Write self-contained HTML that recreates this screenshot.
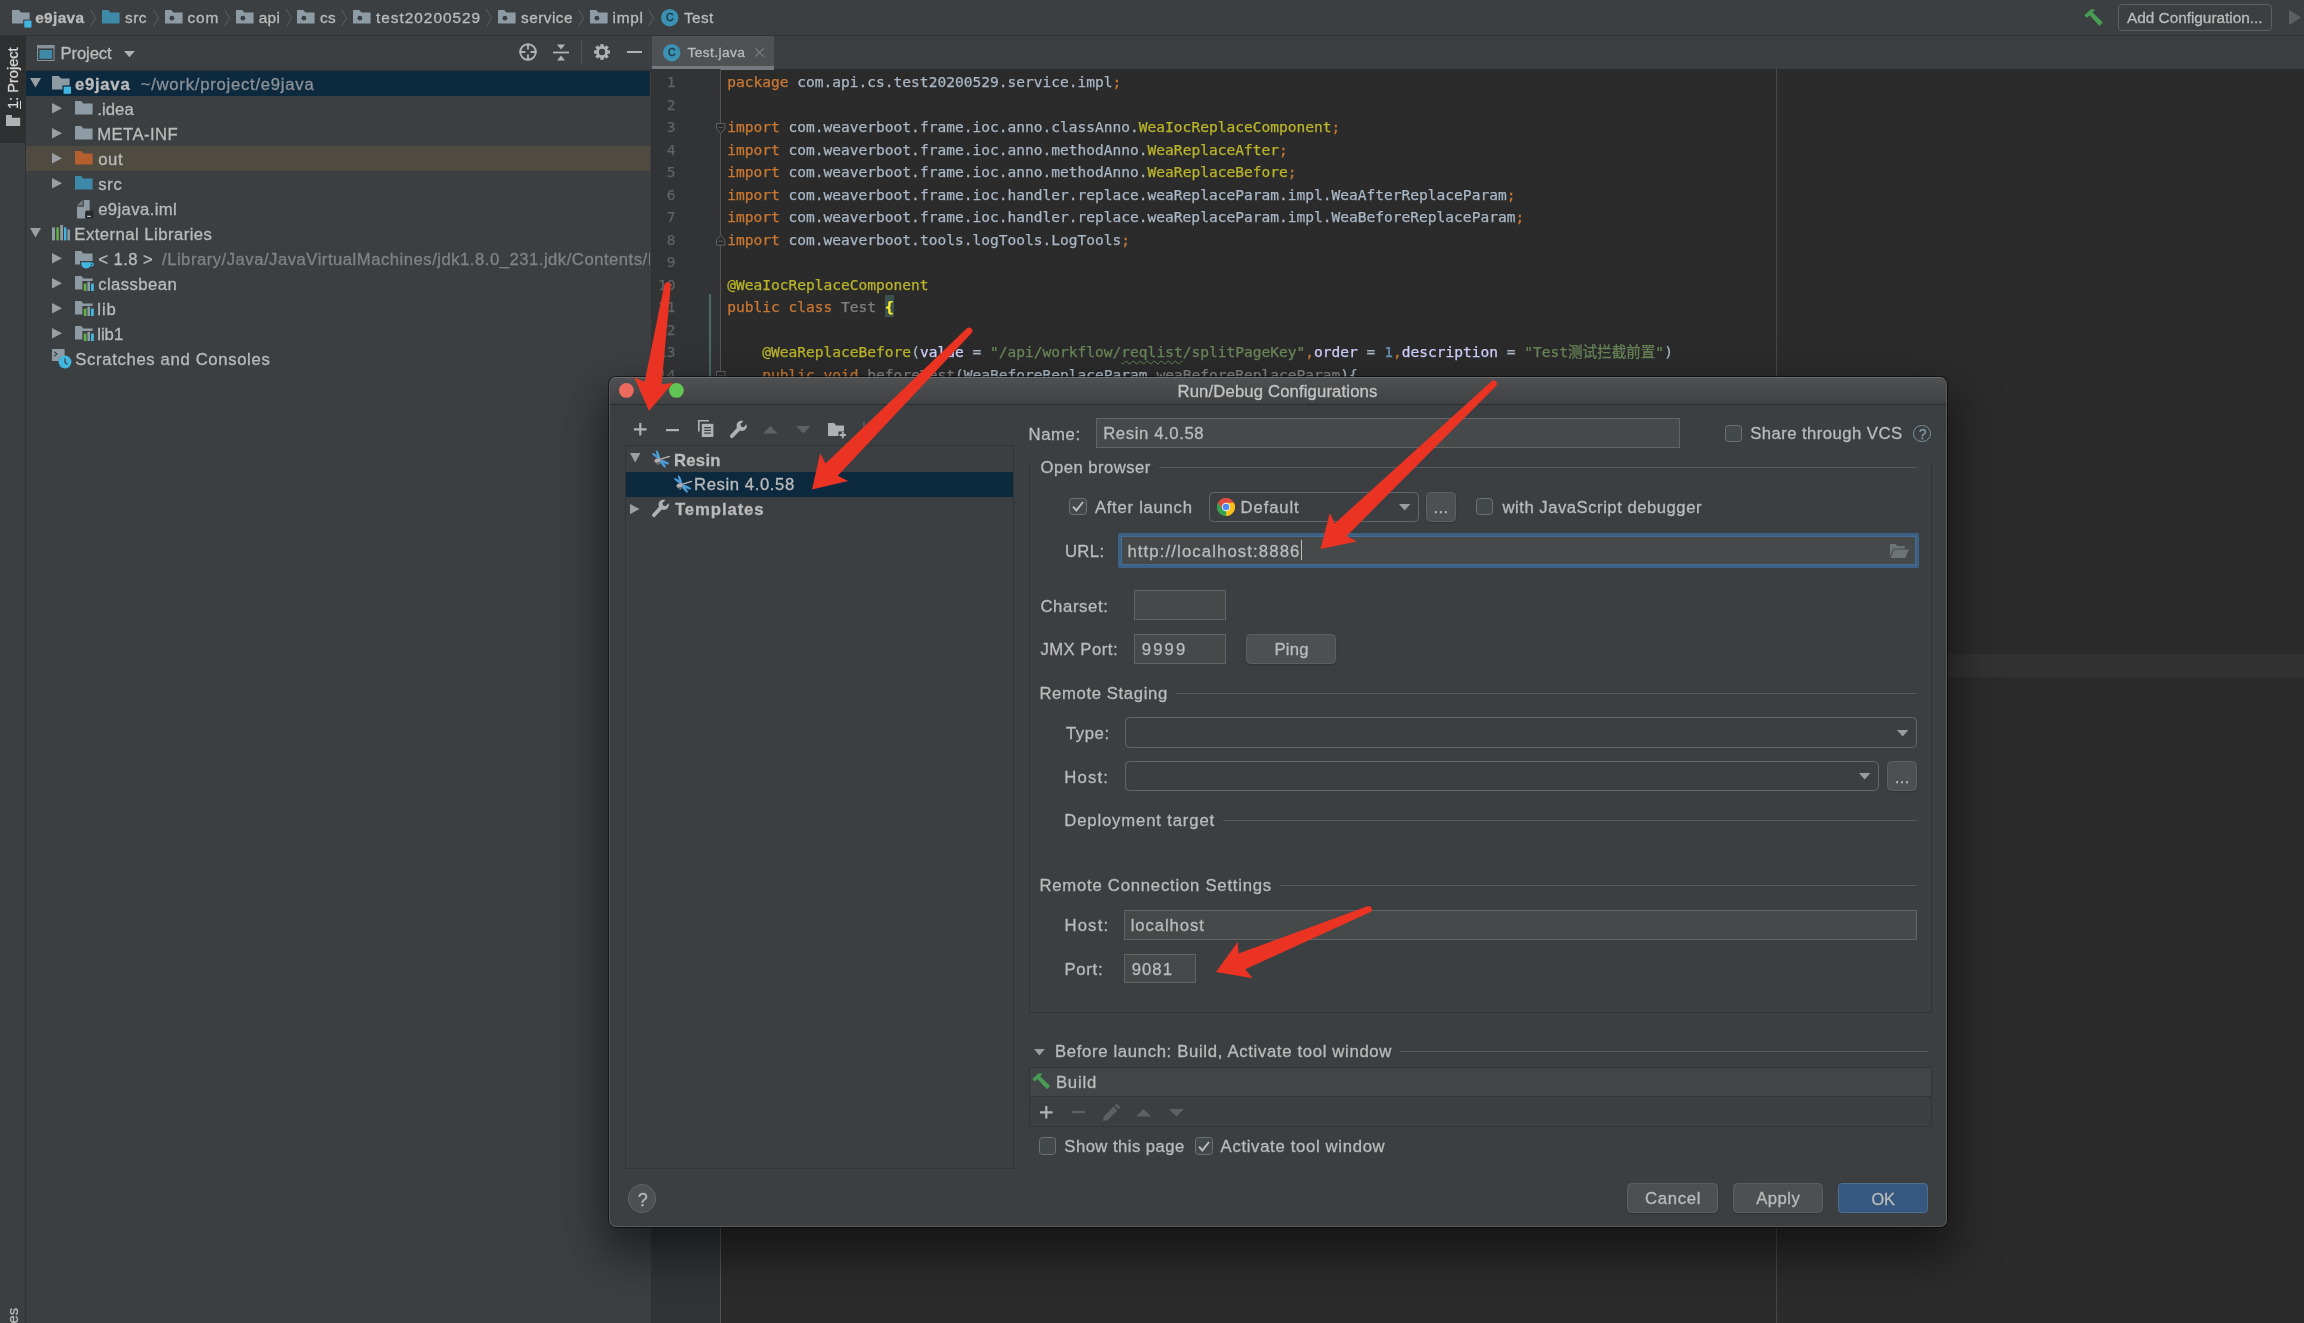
<!DOCTYPE html>
<html><head><meta charset="utf-8"><title>Run/Debug Configurations</title>
<style>
*{box-sizing:border-box;margin:0;padding:0}
html,body{width:2304px;height:1323px;overflow:hidden;background:#3c3f41}
body{position:relative;will-change:transform;font-family:"Liberation Sans","Noto Sans CJK SC",sans-serif;font-size:16px;color:#bbbbbb}
.a{position:absolute}
.t{position:absolute;white-space:pre;-webkit-text-stroke:.3px}
svg{position:absolute;overflow:visible}
.ln{position:absolute;left:651px;width:24.5px;text-align:right;color:#606366;white-space:pre;line-height:22.5px;height:22.5px;font-family:"DejaVu Sans Mono","Liberation Mono",monospace;font-size:14.563px;-webkit-text-stroke:.25px}
.cl{position:absolute;left:727.2px;white-space:pre;line-height:22.5px;height:22.5px;color:#a9b7c6;font-family:"DejaVu Sans Mono","Liberation Mono","Noto Sans CJK SC",monospace;font-size:14.563px;-webkit-text-stroke:.25px}
.k{color:#cc7832}.an{color:#bbb529}.s{color:#6a8759}.n{color:#6897bb}.u{color:#808080}.w{color:#d0d0ff}
</style></head><body>
<!-- base -->
<div class="a" style="left:651px;top:69px;width:1653px;height:1254px;background:#2b2b2b"></div>
<!-- topbar -->
<div class="a" style="left:0px;top:0px;width:2304px;height:35px;background:#3c3f41"></div>
<div class="a" style="left:0px;top:35px;width:2304px;height:1px;background:#323232"></div>
<svg style="left:12px;top:10px" width="19.5" height="17.6" viewBox="0 0 19.5 17.6" ><path d="M0 0 H6.8 L9 2.6 H17.6 V13.6 H0 Z" fill="#8d9ba4"/><rect x="11.2" y="9.6" width="8.3" height="8" fill="#3c3f41"/><rect x="12.3" y="10.6" width="7.2" height="7" fill="#40b6e0"/></svg>
<div class="t" style="left:35.20px;top:7.90px;font-size:15.4px;line-height:20px;height:20px;letter-spacing:0.357px;font-weight:700;">e9java</div>
<svg style="left:90px;top:8.5px" width="6" height="18" viewBox="0 0 6 18" ><path d="M0.5 0.5 L5.5 9 L0.5 17.5" fill="none" stroke="#5c6063" stroke-width="1"/></svg>
<svg style="left:102px;top:10px" width="17.6" height="13.6" viewBox="0 0 17.6 13.6" ><path d="M0 0 H6.2 L8.4 2.4 H17.6 V13.6 H0 Z" fill="#3e88a8"/></svg>
<div class="t" style="left:125.00px;top:7.90px;font-size:15.4px;line-height:20px;height:20px;letter-spacing:0.440px;">src</div>
<svg style="left:152.5px;top:8.5px" width="6" height="18" viewBox="0 0 6 18" ><path d="M0.5 0.5 L5.5 9 L0.5 17.5" fill="none" stroke="#5c6063" stroke-width="1"/></svg>
<svg style="left:164.6px;top:10px" width="17.6" height="13.6" viewBox="0 0 17.6 13.6" ><path d="M0 0 H6.2 L8.4 2.4 H17.6 V13.6 H0 Z" fill="#8d9ba4"/><circle cx="6.9" cy="8.2" r="2.4" fill="#3c3f41"/></svg>
<div class="t" style="left:187.50px;top:7.90px;font-size:15.4px;line-height:20px;height:20px;letter-spacing:0.823px;">com</div>
<svg style="left:223.8px;top:8.5px" width="6" height="18" viewBox="0 0 6 18" ><path d="M0.5 0.5 L5.5 9 L0.5 17.5" fill="none" stroke="#5c6063" stroke-width="1"/></svg>
<svg style="left:235.8px;top:10px" width="17.6" height="13.6" viewBox="0 0 17.6 13.6" ><path d="M0 0 H6.2 L8.4 2.4 H17.6 V13.6 H0 Z" fill="#8d9ba4"/><circle cx="6.9" cy="8.2" r="2.4" fill="#3c3f41"/></svg>
<div class="t" style="left:258.70px;top:7.90px;font-size:15.4px;line-height:20px;height:20px;letter-spacing:0.340px;">api</div>
<svg style="left:286px;top:8.5px" width="6" height="18" viewBox="0 0 6 18" ><path d="M0.5 0.5 L5.5 9 L0.5 17.5" fill="none" stroke="#5c6063" stroke-width="1"/></svg>
<svg style="left:296.9px;top:10px" width="17.6" height="13.6" viewBox="0 0 17.6 13.6" ><path d="M0 0 H6.2 L8.4 2.4 H17.6 V13.6 H0 Z" fill="#8d9ba4"/><circle cx="6.9" cy="8.2" r="2.4" fill="#3c3f41"/></svg>
<div class="t" style="left:320.00px;top:7.90px;font-size:15.4px;line-height:20px;height:20px;letter-spacing:0.305px;">cs</div>
<svg style="left:341px;top:8.5px" width="6" height="18" viewBox="0 0 6 18" ><path d="M0.5 0.5 L5.5 9 L0.5 17.5" fill="none" stroke="#5c6063" stroke-width="1"/></svg>
<svg style="left:353.3px;top:10px" width="17.6" height="13.6" viewBox="0 0 17.6 13.6" ><path d="M0 0 H6.2 L8.4 2.4 H17.6 V13.6 H0 Z" fill="#8d9ba4"/><circle cx="6.9" cy="8.2" r="2.4" fill="#3c3f41"/></svg>
<div class="t" style="left:376.00px;top:7.90px;font-size:15.4px;line-height:20px;height:20px;letter-spacing:0.989px;">test20200529</div>
<svg style="left:486px;top:8.5px" width="6" height="18" viewBox="0 0 6 18" ><path d="M0.5 0.5 L5.5 9 L0.5 17.5" fill="none" stroke="#5c6063" stroke-width="1"/></svg>
<svg style="left:498px;top:10px" width="17.6" height="13.6" viewBox="0 0 17.6 13.6" ><path d="M0 0 H6.2 L8.4 2.4 H17.6 V13.6 H0 Z" fill="#8d9ba4"/><circle cx="6.9" cy="8.2" r="2.4" fill="#3c3f41"/></svg>
<div class="t" style="left:521.00px;top:7.90px;font-size:15.4px;line-height:20px;height:20px;letter-spacing:0.468px;">service</div>
<svg style="left:578px;top:8.5px" width="6" height="18" viewBox="0 0 6 18" ><path d="M0.5 0.5 L5.5 9 L0.5 17.5" fill="none" stroke="#5c6063" stroke-width="1"/></svg>
<svg style="left:590.4px;top:10px" width="17.6" height="13.6" viewBox="0 0 17.6 13.6" ><path d="M0 0 H6.2 L8.4 2.4 H17.6 V13.6 H0 Z" fill="#8d9ba4"/><circle cx="6.9" cy="8.2" r="2.4" fill="#3c3f41"/></svg>
<div class="t" style="left:612.50px;top:7.90px;font-size:15.4px;line-height:20px;height:20px;letter-spacing:0.734px;">impl</div>
<svg style="left:648.4px;top:8.5px" width="6" height="18" viewBox="0 0 6 18" ><path d="M0.5 0.5 L5.5 9 L0.5 17.5" fill="none" stroke="#5c6063" stroke-width="1"/></svg>
<svg style="left:660.6999999999999px;top:8.7px" width="17.4" height="17.4" viewBox="0 0 17.4 17.4" ><circle cx="8.7" cy="8.7" r="8.7" fill="#3a91b3"/><text x="8.7" y="12.399999999999999" text-anchor="middle" font-family="Liberation Sans,sans-serif" font-size="10.6" font-weight="400" fill="#1f3a47" stroke="#1f3a47" stroke-width=".5">C</text></svg>
<div class="t" style="left:684.00px;top:7.90px;font-size:15.4px;line-height:20px;height:20px;letter-spacing:0.350px;">Test</div>
<svg style="left:2084.4px;top:8.6px" width="19.0" height="17.5" viewBox="0 0 19 17.5" ><path d="M0.3 6.2 L6.6 0.6 Q9.2 -0.5 11 1 L8.4 3.3 L18.8 13.6 L15.6 17 L5.6 6.3 L2.9 8.8 Z" fill="#499c54"/></svg>
<div class="a" style="left:2118px;top:4px;width:153.6px;height:27px;border:1px solid #5e6060;border-radius:4px;"></div>
<div class="t" style="left:2127.00px;top:7.90px;font-size:15.4px;line-height:20px;height:20px;letter-spacing:-0.029px;">Add Configuration...</div>
<svg style="left:2289px;top:10px" width="12.2" height="15" viewBox="0 0 12.2 15" ><path d="M0 0 L12.2 7.5 L0 15 Z" fill="#5c5f61"/></svg>
<!-- stripe -->
<div class="a" style="left:0px;top:36px;width:25px;height:1287px;background:#3c3f41"></div>
<div class="a" style="left:25px;top:36px;width:1px;height:1287px;background:#323232"></div>
<div class="a" style="left:0px;top:36px;width:25px;height:106.5px;background:#2d2f30"></div>
<div class="t" style="left:3.2px;top:108.6px;width:70px;height:20px;line-height:20px;font-size:14.6px;letter-spacing:0;color:#d4d4d4;transform-origin:0 0;transform:rotate(-90deg)"><span style="text-decoration:underline;text-underline-offset:2px">1</span>: Project</div>
<svg style="left:5.9px;top:114.8px" width="14.2" height="11.1" viewBox="0 0 14.2 11.1" ><path d="M0 2.7 H14.2 V11.1 H0 Z M0 0 H5.9 V2.7 H0 Z" fill="#afb1b3"/></svg>
<div class="t" style="left:3.2px;top:1408px;width:100px;text-align:right;height:20px;line-height:20px;font-size:14.6px;letter-spacing:0;color:#bbbbbb;transform-origin:0 0;transform:rotate(-90deg)">2: Favorites</div>
<!-- project -->
<div class="a" style="left:26px;top:36px;width:625px;height:34px;background:#3c3f41"></div>
<div class="a" style="left:26px;top:70px;width:625px;height:1px;background:#323232"></div>
<div class="a" style="left:650.8px;top:36px;width:1px;height:1287px;background:#323232"></div>
<svg style="left:37px;top:44.5px" width="17.5" height="16" viewBox="0 0 17.5 16" ><rect x="0.5" y="0.5" width="16.5" height="15" fill="none" stroke="#87939b" stroke-width="1"/><rect x="0" y="0" width="17.5" height="3.4" fill="#87939b"/><rect x="2.4" y="5" width="12.7" height="8.8" fill="#3e88a8"/></svg>
<div class="t" style="left:60.50px;top:44.40px;font-size:16.7px;line-height:20px;height:20px;letter-spacing:-0.133px;">Project</div>
<svg style="left:124.2px;top:51px" width="10.9" height="6.3" viewBox="0 0 10.9 6.3" ><path d="M0 0 H10.9 L5.45 6.3 Z" fill="#afb1b3"/></svg>
<svg style="left:519px;top:43px" width="18" height="18" viewBox="0 0 18 18" ><circle cx="9" cy="9" r="7.8" fill="none" stroke="#afb1b3" stroke-width="1.9"/><path d="M9 0.6 V6.4 M9 11.6 V17.4 M0.6 9 H6.4 M11.6 9 H17.4" stroke="#afb1b3" stroke-width="1.9"/></svg>
<svg style="left:552.5px;top:43.5px" width="16" height="17" viewBox="0 0 16 17" ><path d="M0 8.5 H16" stroke="#afb1b3" stroke-width="1.8"/><path d="M4 0.5 H12 L8 5.6 Z M4 16.5 H12 L8 11.4 Z" fill="#afb1b3"/></svg>
<div class="a" style="left:581px;top:40px;width:1px;height:24px;background:#505355"></div>
<svg style="left:592.7px;top:43px" width="18" height="18" viewBox="0 0 18 18" ><g transform="translate(9 9) scale(.88)"><circle r="5.2" fill="none" stroke="#afb1b3" stroke-width="3.2"/><g fill="#afb1b3"><rect x="-1.9" y="-9" width="3.8" height="4"/><rect x="-1.9" y="5" width="3.8" height="4"/><rect x="-9" y="-1.9" width="4" height="3.8"/><rect x="5" y="-1.9" width="4" height="3.8"/><g transform="rotate(45)"><rect x="-1.9" y="-9" width="3.8" height="4"/><rect x="-1.9" y="5" width="3.8" height="4"/><rect x="-9" y="-1.9" width="4" height="3.8"/><rect x="5" y="-1.9" width="4" height="3.8"/></g></g></g></svg>
<div class="a" style="left:627px;top:51px;width:14.6px;height:2.2px;background:#afb1b3"></div>
<div class="a" style="left:26px;top:71px;width:624px;height:25px;background:#0d293e"></div>
<div class="a" style="left:26px;top:146px;width:624px;height:25px;background:#4f4b41"></div>
<svg style="left:30px;top:78.2px" width="11" height="9.5" viewBox="0 0 11 9.5" ><path d="M0 0 H11 L5.5 9.5 Z" fill="#9c9fa1"/></svg>
<svg style="left:51.9px;top:76px" width="19.5" height="17.8" viewBox="0 0 19.5 17.8" ><path d="M0 0 H6.8 L9 2.6 H17.6 V13.6 H0 Z" fill="#8d9ba4"/><rect x="10.4" y="9.4" width="9" height="8.4" fill="#0d293e"/><rect x="11.6" y="10.6" width="7.4" height="7.2" fill="#40b6e0"/></svg>
<div class="t" style="left:74.90px;top:75.10px;font-size:16.7px;line-height:20px;height:20px;letter-spacing:0.748px;font-weight:700;">e9java</div>
<div class="t" style="left:140.70px;top:75.10px;font-size:16.7px;line-height:20px;height:20px;letter-spacing:0.742px;color:#8b9197;">~/work/project/e9java</div>
<svg style="left:52.2px;top:103.2px" width="10" height="10.6" viewBox="0 0 10 10.6" ><path d="M0 0 L10 5.3 L0 10.6 Z" fill="#9c9fa1"/></svg>
<svg style="left:52.2px;top:128.2px" width="10" height="10.6" viewBox="0 0 10 10.6" ><path d="M0 0 L10 5.3 L0 10.6 Z" fill="#9c9fa1"/></svg>
<svg style="left:52.2px;top:153.2px" width="10" height="10.6" viewBox="0 0 10 10.6" ><path d="M0 0 L10 5.3 L0 10.6 Z" fill="#9c9fa1"/></svg>
<svg style="left:52.2px;top:178.2px" width="10" height="10.6" viewBox="0 0 10 10.6" ><path d="M0 0 L10 5.3 L0 10.6 Z" fill="#9c9fa1"/></svg>
<svg style="left:74.9px;top:101.2px" width="17.6" height="13.6" viewBox="0 0 17.6 13.6" ><path d="M0 0 H6.2 L8.4 2.4 H17.6 V13.6 H0 Z" fill="#8d9ba4"/></svg>
<div class="t" style="left:97.20px;top:100.10px;font-size:16.7px;line-height:20px;height:20px;letter-spacing:0.074px;">.idea</div>
<svg style="left:74.9px;top:126.2px" width="17.6" height="13.6" viewBox="0 0 17.6 13.6" ><path d="M0 0 H6.2 L8.4 2.4 H17.6 V13.6 H0 Z" fill="#8d9ba4"/></svg>
<div class="t" style="left:97.20px;top:125.10px;font-size:16.7px;line-height:20px;height:20px;letter-spacing:0.434px;">META-INF</div>
<svg style="left:74.9px;top:151.2px" width="17.6" height="13.6" viewBox="0 0 17.6 13.6" ><path d="M0 0 H6.2 L8.4 2.4 H17.6 V13.6 H0 Z" fill="#b55f2f"/></svg>
<div class="t" style="left:98.20px;top:150.10px;font-size:16.7px;line-height:20px;height:20px;letter-spacing:0.569px;">out</div>
<svg style="left:74.9px;top:176.2px" width="17.6" height="13.6" viewBox="0 0 17.6 13.6" ><path d="M0 0 H6.2 L8.4 2.4 H17.6 V13.6 H0 Z" fill="#3e88a8"/></svg>
<div class="t" style="left:98.20px;top:175.10px;font-size:16.7px;line-height:20px;height:20px;letter-spacing:0.700px;">src</div>
<svg style="left:77.3px;top:200px" width="16.5" height="18.5" viewBox="0 0 16.5 18.5" ><path d="M6.8 0 H12.6 V12 H8 V18.5 H0 V6.8 H6.8 Z" fill="#8d9ba4"/><path d="M0 5.6 L5.6 0 V5.6 Z" fill="#73808a"/><rect x="8.6" y="10.6" width="7.9" height="7.9" fill="#26282a"/><rect x="10.2" y="15.8" width="3.6" height="1.1" fill="#d8d8d8"/></svg>
<div class="t" style="left:98.20px;top:200.10px;font-size:16.7px;line-height:20px;height:20px;letter-spacing:0.387px;">e9java.iml</div>
<svg style="left:30px;top:228.2px" width="11" height="9.5" viewBox="0 0 11 9.5" ><path d="M0 0 H11 L5.5 9.5 Z" fill="#9c9fa1"/></svg>
<svg style="left:52.2px;top:224.6px" width="18" height="15.4" viewBox="0 0 18 15.4" ><rect x="0" y="2.4" width="3" height="13" fill="#8d9ba4"/><rect x="4.4" y="2.4" width="2.4" height="13" fill="#62b543"/><rect x="8.2" y="0" width="2.8" height="15.4" fill="#8d9ba4"/><rect x="12" y="2.4" width="2.4" height="13" fill="#40b6e0"/><rect x="15.4" y="4.6" width="2.6" height="10.8" fill="#8d9ba4"/></svg>
<div class="t" style="left:74.30px;top:225.10px;font-size:16.7px;line-height:20px;height:20px;letter-spacing:0.458px;">External Libraries</div>
<svg style="left:52.2px;top:253.2px" width="10" height="10.6" viewBox="0 0 10 10.6" ><path d="M0 0 L10 5.3 L0 10.6 Z" fill="#9c9fa1"/></svg>
<svg style="left:52.2px;top:278.2px" width="10" height="10.6" viewBox="0 0 10 10.6" ><path d="M0 0 L10 5.3 L0 10.6 Z" fill="#9c9fa1"/></svg>
<svg style="left:52.2px;top:303.2px" width="10" height="10.6" viewBox="0 0 10 10.6" ><path d="M0 0 L10 5.3 L0 10.6 Z" fill="#9c9fa1"/></svg>
<svg style="left:52.2px;top:328.2px" width="10" height="10.6" viewBox="0 0 10 10.6" ><path d="M0 0 L10 5.3 L0 10.6 Z" fill="#9c9fa1"/></svg>
<svg style="left:74.9px;top:251.2px" width="19.5" height="18" viewBox="0 0 19.5 18" ><path d="M0 0 H6.2 L8.4 2.4 H17.6 V10 H5 V13.6 H0 Z" fill="#8d9ba4"/><path d="M6.2 11.2 H16.2 C16.2 15 14.4 17.4 11.2 17.4 C8 17.4 6.2 15 6.2 11.2 Z" fill="#40b6e0"/><path d="M16 12.2 C18.6 11.6 19.4 14.6 15.4 15.2" fill="none" stroke="#40b6e0" stroke-width="1.2"/></svg>
<div class="t" style="left:98.20px;top:250.10px;font-size:16.7px;line-height:20px;height:20px;letter-spacing:0.447px;">&lt; 1.8 &gt;</div>
<div class="t" style="left:162.00px;top:250.10px;font-size:16.7px;line-height:20px;height:20px;letter-spacing:0.494px;color:#7f8385;width:488px;overflow:hidden;">/Library/Java/JavaVirtualMachines/jdk1.8.0_231.jdk/Contents/Home</div>
<svg style="left:74.9px;top:276.2px" width="19" height="15" viewBox="0 0 19 15" ><path d="M0 0 H6.2 L8.4 2.4 H17.6 V5 H7.4 V13.6 H0 Z" fill="#8d9ba4"/><rect x="8.8" y="7.6" width="2.6" height="7.4" fill="#62b543"/><rect x="12.4" y="5.8" width="2.6" height="9.2" fill="#8d9ba4"/><rect x="16" y="7.6" width="2.8" height="7.4" fill="#40b6e0"/></svg>
<div class="t" style="left:98.20px;top:275.10px;font-size:16.7px;line-height:20px;height:20px;letter-spacing:0.417px;">classbean</div>
<svg style="left:74.9px;top:301.2px" width="19" height="15" viewBox="0 0 19 15" ><path d="M0 0 H6.2 L8.4 2.4 H17.6 V5 H7.4 V13.6 H0 Z" fill="#8d9ba4"/><rect x="8.8" y="7.6" width="2.6" height="7.4" fill="#62b543"/><rect x="12.4" y="5.8" width="2.6" height="9.2" fill="#8d9ba4"/><rect x="16" y="7.6" width="2.8" height="7.4" fill="#40b6e0"/></svg>
<div class="t" style="left:97.20px;top:300.10px;font-size:16.7px;line-height:20px;height:20px;letter-spacing:0.993px;">lib</div>
<svg style="left:74.9px;top:326.2px" width="19" height="15" viewBox="0 0 19 15" ><path d="M0 0 H6.2 L8.4 2.4 H17.6 V5 H7.4 V13.6 H0 Z" fill="#8d9ba4"/><rect x="8.8" y="7.6" width="2.6" height="7.4" fill="#62b543"/><rect x="12.4" y="5.8" width="2.6" height="9.2" fill="#8d9ba4"/><rect x="16" y="7.6" width="2.8" height="7.4" fill="#40b6e0"/></svg>
<div class="t" style="left:97.20px;top:325.10px;font-size:16.7px;line-height:20px;height:20px;letter-spacing:0.001px;">lib1</div>
<svg style="left:52.2px;top:349px" width="19.5" height="19.5" viewBox="0 0 19.5 19.5" ><path d="M0 0 H12.6 V7 A6.6 6.6 0 0 0 6.6 12 H0 Z" fill="#8d9ba4"/><path d="M2 2.6 L5 5 L2 7.4" fill="none" stroke="#3c3f41" stroke-width="1.1"/><circle cx="13" cy="13" r="6.4" fill="#40b6e0"/><path d="M13 9.4 V13.2 L15.4 15.4" fill="none" stroke="#3c3f41" stroke-width="1.3"/></svg>
<div class="t" style="left:75.30px;top:350.10px;font-size:16.7px;line-height:20px;height:20px;letter-spacing:0.646px;">Scratches and Consoles</div>
<!-- editor -->
<div class="a" style="left:651px;top:36px;width:1653px;height:33px;background:#3c3f41"></div>
<div class="a" style="left:652px;top:36px;width:122.3px;height:30px;background:#4e5254"></div>
<div class="a" style="left:652px;top:66px;width:122.3px;height:3.7px;background:#747a80"></div>
<svg style="left:663.0999999999999px;top:43.599999999999994px" width="17.4" height="17.4" viewBox="0 0 17.4 17.4" ><circle cx="8.7" cy="8.7" r="8.7" fill="#3a91b3"/><text x="8.7" y="12.399999999999999" text-anchor="middle" font-family="Liberation Sans,sans-serif" font-size="10.6" font-weight="400" fill="#1f3a47" stroke="#1f3a47" stroke-width=".5">C</text></svg>
<div class="t" style="left:687.40px;top:42.70px;font-size:13.7px;line-height:20px;height:20px;letter-spacing:0.425px;">Test.java</div>
<svg style="left:755px;top:48px" width="9" height="9" viewBox="0 0 9 9" ><path d="M0.3 0.3 L8.7 8.7 M8.7 0.3 L0.3 8.7" stroke="#7d8183" stroke-width="1.1" fill="none"/></svg>
<div class="a" style="left:651px;top:69px;width:69.5px;height:1254px;background:#313335"></div>
<div class="a" style="left:720px;top:69px;width:1px;height:1254px;background:#555555"></div>
<div class="a" style="left:1776px;top:69px;width:1px;height:1254px;background:#464849"></div>
<div class="a" style="left:721px;top:654px;width:1583px;height:23px;background:#323232"></div>
<div class="a" style="left:709px;top:294px;width:1.6px;height:84px;background:#4a6b60"></div>
<div class="ln" style="top:71.15px">1</div>
<div class="ln" style="top:93.65px">2</div>
<div class="ln" style="top:116.15px">3</div>
<div class="ln" style="top:138.65px">4</div>
<div class="ln" style="top:161.15px">5</div>
<div class="ln" style="top:183.65px">6</div>
<div class="ln" style="top:206.15px">7</div>
<div class="ln" style="top:228.65px">8</div>
<div class="ln" style="top:251.15px">9</div>
<div class="ln" style="top:273.65px">10</div>
<div class="ln" style="top:296.15px">11</div>
<div class="ln" style="top:318.65px">12</div>
<div class="ln" style="top:341.15px">13</div>
<div class="ln" style="top:363.65px">14</div>
<div class="cl" style="top:71.15px"><span class="k">package</span> com.api.cs.test20200529.service.impl<span class="k">;</span></div>
<div class="cl" style="top:116.15px"><span class="k">import</span> com.weaverboot.frame.ioc.anno.classAnno.<span class="an">WeaIocReplaceComponent</span><span class="k">;</span></div>
<div class="cl" style="top:138.65px"><span class="k">import</span> com.weaverboot.frame.ioc.anno.methodAnno.<span class="an">WeaReplaceAfter</span><span class="k">;</span></div>
<div class="cl" style="top:161.15px"><span class="k">import</span> com.weaverboot.frame.ioc.anno.methodAnno.<span class="an">WeaReplaceBefore</span><span class="k">;</span></div>
<div class="cl" style="top:183.65px"><span class="k">import</span> com.weaverboot.frame.ioc.handler.replace.weaReplaceParam.impl.WeaAfterReplaceParam<span class="k">;</span></div>
<div class="cl" style="top:206.15px"><span class="k">import</span> com.weaverboot.frame.ioc.handler.replace.weaReplaceParam.impl.WeaBeforeReplaceParam<span class="k">;</span></div>
<div class="cl" style="top:228.65px"><span class="k">import</span> com.weaverboot.tools.logTools.LogTools<span class="k">;</span></div>
<div class="cl" style="top:273.65px"><span class="an">@WeaIocReplaceComponent</span></div>
<div class="cl" style="top:296.15px"><span class="k">public class</span> <span class="u">Test</span> <span style="display:inline-block;height:22.5px;vertical-align:top;margin-top:-1.6px;padding-top:1.6px;background:#3b514d;color:#ffef28;font-weight:700">{</span></div>
<div class="cl" style="top:341.15px">    <span class="an">@WeaReplaceBefore</span>(<span class="w">value</span> = <span class="s">"/api/workflow/<span style="text-decoration:underline wavy #5e8a4c;text-decoration-thickness:1px;text-underline-offset:3px">reqlist</span>/splitPageKey"</span><span class="k">,</span><span class="w">order</span> = <span class="n">1</span><span class="k">,</span><span class="w">description</span> = <span class="s">"Test测试拦截前置"</span>)</div>
<div class="cl" style="top:363.65px">    <span class="k">public void</span> <span class="u">beforeTest</span>(WeaBeforeReplaceParam <span class="u">weaBeforeReplaceParam</span>){</div>
<svg style="left:715.8px;top:122.60000000000001px" width="9.5" height="10.7" viewBox="0 0 9.5 10.7" ><path d="M0.5 0.5 H9 V6 L4.75 10.2 L0.5 6 Z" fill="#2b2b2b" stroke="#606366" stroke-width="1"/><path d="M2.6 4.6 H6.9" stroke="#606366" stroke-width="1"/></svg>
<svg style="left:715.8px;top:234.6px" width="9.5" height="10.7" viewBox="0 0 9.5 10.7" ><path d="M0.5 10.2 H9 V4.7 L4.75 0.5 L0.5 4.7 Z" fill="#2b2b2b" stroke="#606366" stroke-width="1"/><path d="M2.6 6.2 H6.9" stroke="#606366" stroke-width="1"/></svg>
<svg style="left:715.8px;top:370.59999999999997px" width="9.5" height="10.7" viewBox="0 0 9.5 10.7" ><rect x="0.5" y="0.5" width="8.5" height="9" fill="#2b2b2b" stroke="#606366"/><path d="M2.6 5 H6.9" stroke="#606366" stroke-width="1"/></svg>
<!-- shadow -->
<div class="a" style="left:609px;top:376.5px;width:1338px;height:850px;border-radius:7px;box-shadow:0 22px 45px 6px rgba(0,0,0,.50),0 0 0 1px rgba(0,0,0,.55);"></div>
<!-- dialog -->
<div class="a" style="left:609px;top:376.5px;width:1338px;height:850px;border-radius:7px;background:#3c3f41;border:1px solid #595b5d;border-top-color:#6c6e6f;overflow:hidden;"><div class="a" style="left:0;top:0;width:100%;height:26px;background:linear-gradient(#4e5051,#3f4142)"></div><div class="a" style="left:0;top:26px;width:100%;height:1.5px;background:#2a2c2d"></div></div>
<svg style="left:618.9px;top:383.3px" width="14.8" height="14.8" viewBox="0 0 14.8 14.8" ><circle cx="7.4" cy="7.4" r="7.4" fill="#ec6a5e"/></svg>
<svg style="left:643.9px;top:383.3px" width="14.8" height="14.8" viewBox="0 0 14.8 14.8" ><circle cx="7.4" cy="7.4" r="7.4" fill="#f4bf4f"/></svg>
<svg style="left:668.9px;top:383.3px" width="14.8" height="14.8" viewBox="0 0 14.8 14.8" ><circle cx="7.4" cy="7.4" r="7.4" fill="#61c554"/></svg>
<div class="t" style="left:1177.50px;top:382.20px;font-size:16.7px;line-height:20px;height:20px;letter-spacing:0.138px;color:#c4c4c4;">Run/Debug Configurations</div>
<svg style="left:633.5px;top:423.3px" width="12.6" height="12.6" viewBox="0 0 12.6 12.6" ><path d="M0 6.3 H12.6 M6.3 0 V12.6" stroke="#afb1b3" stroke-width="2.2" fill="none"/></svg>
<svg style="left:666.3px;top:428.59999999999997px" width="13" height="2.2" viewBox="0 0 13 2.2" ><rect width="13" height="2.2" fill="#afb1b3"/></svg>
<svg style="left:698px;top:420px" width="15.4" height="17" viewBox="0 0 15.4 17" ><path d="M0.8 11.6 V0.8 H11" fill="none" stroke="#afb1b3" stroke-width="1.6"/><rect x="3.8" y="3.8" width="11.6" height="13.2" fill="#afb1b3"/><path d="M6.2 7.6 H13 M6.2 10.4 H13 M6.2 13.2 H13" stroke="#3c3f41" stroke-width="1.2"/></svg>
<svg style="left:729.7px;top:420.6px" width="17.5" height="17.5" viewBox="0 0 17.5 17.5" ><path d="M16.6 3.2 L13.6 6.2 L11 5.6 L10.4 3 L13.4 0 C11.2 -0.6 8.8 0 7.6 1.6 C6.4 3.2 6.3 5.2 7 6.8 L0.4 14 C-0.3 14.8 -0.1 15.9 0.6 16.6 C1.3 17.3 2.5 17.4 3.2 16.6 L9.9 9.6 C11.6 10.4 13.8 10.1 15.3 8.6 C16.8 7.1 17.2 5 16.6 3.2 Z" fill="#afb1b3"/></svg>
<svg style="left:763.2px;top:426px" width="14.6" height="7.5" viewBox="0 0 14.6 7.5" ><path d="M0 7.5 L7.3 0 L14.6 7.5 Z" fill="#5e6162"/></svg>
<svg style="left:795.7px;top:426px" width="14.6" height="7.5" viewBox="0 0 14.6 7.5" ><path d="M0 0 H14.6 L7.3 7.5 Z" fill="#5e6162"/></svg>
<svg style="left:828px;top:422.6px" width="18" height="15.6" viewBox="0 0 18 15.6" ><path d="M0 0 H6 L8.2 2.4 H16 V8.4 H10.4 V13 H0 Z" fill="#afb1b3"/><path d="M11.6 12.1 H18 M14.8 8.9 V15.3" stroke="#afb1b3" stroke-width="2"/></svg>
<svg style="left:862px;top:422px" width="12" height="14" viewBox="0 0 12 14" ><path d="M2 0 V14" stroke="#5e6162" stroke-width="1.6"/></svg>
<div class="a" style="left:624.7px;top:444.5px;width:389.3px;height:724.5px;border:1px solid #323537;background:#3c3f41"></div>
<div class="a" style="left:625.7px;top:472px;width:387.3px;height:24.6px;background:#0d293e"></div>
<svg style="left:630.2px;top:453px" width="10.4" height="9.4" viewBox="0 0 10.4 9.4" ><path d="M0 0 H10.4 L5.2 9.4 Z" fill="#9c9fa1"/></svg>
<svg style="left:651.6px;top:450.4px" width="18" height="18" viewBox="0 0 18 18" ><path d="M7 9.6 L17.6 6.4" stroke="#b9b6b8" stroke-width="1.2" stroke-linecap="round"/><ellipse cx="4" cy="6" rx="4.6" ry="1.25" fill="#4a9bd6" transform="rotate(35.5 4 6)"/><ellipse cx="6" cy="4.6" rx="4.4" ry="1.2" fill="#4f9fd8" transform="rotate(69 6 4.6)"/><ellipse cx="12.5" cy="12" rx="4.9" ry="1.25" fill="#4a9bd6" transform="rotate(24 12.5 12)"/><ellipse cx="10.8" cy="14" rx="4.5" ry="1.25" fill="#4f9fd8" transform="rotate(52 10.8 14)"/><ellipse cx="5.6" cy="10.4" rx="3.2" ry="2" fill="#b3aeb1" transform="rotate(-18 5.6 10.4)"/><path d="M4.6 12 L5 14.6 M6.2 12 L6.4 14.8 M7.4 11.6 L7.2 14" stroke="#8f8c8e" stroke-width=".8"/></svg>
<div class="t" style="left:674.00px;top:450.50px;font-size:16.7px;line-height:20px;height:20px;letter-spacing:0.263px;font-weight:700;">Resin</div>
<svg style="left:674px;top:475.2px" width="18" height="18" viewBox="0 0 18 18" ><path d="M7 9.6 L17.6 6.4" stroke="#b9b6b8" stroke-width="1.2" stroke-linecap="round"/><ellipse cx="4" cy="6" rx="4.6" ry="1.25" fill="#4a9bd6" transform="rotate(35.5 4 6)"/><ellipse cx="6" cy="4.6" rx="4.4" ry="1.2" fill="#4f9fd8" transform="rotate(69 6 4.6)"/><ellipse cx="12.5" cy="12" rx="4.9" ry="1.25" fill="#4a9bd6" transform="rotate(24 12.5 12)"/><ellipse cx="10.8" cy="14" rx="4.5" ry="1.25" fill="#4f9fd8" transform="rotate(52 10.8 14)"/><ellipse cx="5.6" cy="10.4" rx="3.2" ry="2" fill="#b3aeb1" transform="rotate(-18 5.6 10.4)"/><path d="M4.6 12 L5 14.6 M6.2 12 L6.4 14.8 M7.4 11.6 L7.2 14" stroke="#8f8c8e" stroke-width=".8"/></svg>
<div class="t" style="left:694.00px;top:475.30px;font-size:16.7px;line-height:20px;height:20px;letter-spacing:0.590px;">Resin 4.0.58</div>
<svg style="left:629.6px;top:503.8px" width="9.4" height="10.2" viewBox="0 0 9.4 10.2" ><path d="M0 0 L9.4 5.1 L0 10.2 Z" fill="#9c9fa1"/></svg>
<svg style="left:652px;top:500.4px" width="17.5" height="17.5" viewBox="0 0 17.5 17.5" ><path d="M16.6 3.2 L13.6 6.2 L11 5.6 L10.4 3 L13.4 0 C11.2 -0.6 8.8 0 7.6 1.6 C6.4 3.2 6.3 5.2 7 6.8 L0.4 14 C-0.3 14.8 -0.1 15.9 0.6 16.6 C1.3 17.3 2.5 17.4 3.2 16.6 L9.9 9.6 C11.6 10.4 13.8 10.1 15.3 8.6 C16.8 7.1 17.2 5 16.6 3.2 Z" fill="#afb1b3"/></svg>
<div class="t" style="left:675.00px;top:500.10px;font-size:16.7px;line-height:20px;height:20px;letter-spacing:0.910px;font-weight:700;">Templates</div>
<div class="a" style="left:627.8px;top:1184.3px;width:28.6px;height:28.6px;border-radius:50%;background:#4c5052;border:1px solid #616365"></div>
<div class="t" style="left:637.80px;top:1189.50px;font-size:18px;line-height:20px;height:20px;letter-spacing:0.000px;color:#b4b6b8;">?</div>
<div class="t" style="left:1028.60px;top:424.50px;font-size:16.7px;line-height:20px;height:20px;letter-spacing:0.597px;">Name:</div>
<div class="a" style="left:1096px;top:418px;width:584px;height:29.600000000000023px;background:#45494a;border:1px solid #646464;"></div>
<div class="t" style="left:1103.20px;top:424.30px;font-size:16.7px;line-height:20px;height:20px;letter-spacing:0.608px;">Resin 4.0.58</div>
<div class="a" style="left:1724.7px;top:424.5px;width:17.4px;height:17.4px;border:1.3px solid #6e7173;background:#43494a;border-radius:3.5px;"></div>
<div class="t" style="left:1750.20px;top:424.30px;font-size:16.7px;line-height:20px;height:20px;letter-spacing:0.445px;">Share through VCS</div>
<div class="a" style="left:1913.4px;top:424.6px;width:17.4px;height:17.4px;border-radius:50%;border:1.3px solid #7b92a0"></div>
<div class="t" style="left:1918.80px;top:424.40px;font-size:14px;line-height:20px;height:20px;letter-spacing:0.000px;color:#8299a7;">?</div>
<div class="a" style="left:1029px;top:461.5px;width:902.6px;height:551px;border:1px solid #323537;border-top:none;"></div>
<div class="t" style="left:1040.60px;top:458.20px;font-size:16.7px;line-height:20px;height:20px;letter-spacing:0.450px;">Open browser</div>
<div class="a" style="left:1159px;top:467px;width:758px;height:1px;background:#585b5d"></div>
<div class="a" style="left:1069.2px;top:497.8px;width:17.4px;height:17.4px;border:1.3px solid #6e7173;background:#43494a;border-radius:3.5px;"><svg style="left:2px;top:2.5px" width="12" height="11" viewBox="0 0 12 11"><path d="M1 5.6 L4.4 9.4 L11 1" fill="none" stroke="#bbbbbb" stroke-width="2"/></svg></div>
<div class="t" style="left:1094.90px;top:497.90px;font-size:16.7px;line-height:20px;height:20px;letter-spacing:0.730px;">After launch</div>
<div class="a" style="left:1209px;top:491.6px;width:209.70000000000005px;height:30.399999999999977px;background:#3c3f41;border:1.4px solid #646668;border-radius:4.5px;"></div>
<svg style="left:1398.5px;top:504.1px" width="11.4" height="6.5" viewBox="0 0 11.4 6.5" ><path d="M0 0 H11.4 L5.7 6.5 Z" fill="#9a9da0"/></svg>
<svg style="left:1217.2px;top:497.8px" width="18" height="18" viewBox="0 0 18 18" ><circle cx="9" cy="9" r="9" fill="#e04a3f"/><path d="M9 9 L1.2 4.5 A9 9 0 0 0 9.2 18 L13.2 11 Z" fill="#32a350"/><path d="M9 9 L9.2 18 A9 9 0 0 0 16.8 4.5 L9 4.5 Z" fill="#fbc116"/><path d="M9 4.5 H16.8 A9 9 0 0 0 1.2 4.5 L5 11 Z" fill="#e04a3f"/><circle cx="9" cy="9" r="4.2" fill="#f1f1f1"/><circle cx="9" cy="9" r="3.3" fill="#4a8af4"/></svg>
<div class="t" style="left:1240.60px;top:497.90px;font-size:16.7px;line-height:20px;height:20px;letter-spacing:0.877px;">Default</div>
<div class="a" style="left:1426.2px;top:491.8px;width:29.59999999999991px;height:29.999999999999943px;background:#4c5052;border:1px solid #5e6060;border-radius:4.5px;box-shadow:0 1px 1.5px rgba(0,0,0,.22);"></div>
<div class="t" style="left:1433.50px;top:497.90px;font-size:16.7px;line-height:20px;height:20px;letter-spacing:0.364px;">...</div>
<div class="a" style="left:1476px;top:497.8px;width:17.4px;height:17.4px;border:1.3px solid #6e7173;background:#43494a;border-radius:3.5px;"></div>
<div class="t" style="left:1502.50px;top:497.90px;font-size:16.7px;line-height:20px;height:20px;letter-spacing:0.504px;">with JavaScript debugger</div>
<div class="t" style="left:1064.90px;top:541.50px;font-size:16.7px;line-height:20px;height:20px;letter-spacing:0.372px;">URL:</div>
<div class="a" style="left:1117.6px;top:533.2px;width:801.6px;height:35px;background:#45494a;border:3px solid #3d6185;border-radius:2px;box-shadow:inset 0 0 0 1px #466d94"></div>
<div class="t" style="left:1127.40px;top:541.50px;font-size:16.7px;line-height:20px;height:20px;letter-spacing:1.131px;">http://localhost:8886</div>
<div class="a" style="left:1301px;top:540.4px;width:1.3px;height:19.6px;background:#bbbbbb"></div>
<svg style="left:1890.4px;top:544.2px" width="18.8" height="14" viewBox="0 0 18.8 14" ><path d="M0 0 H5.6 L7.4 2 H14.6 V4.4 H3.4 L0 12.6 Z" fill="#6d7377"/><path d="M4.2 5.6 H18.8 L15.2 14 H0.6 Z" fill="#6d7377"/></svg>
<div class="t" style="left:1040.40px;top:596.50px;font-size:16.7px;line-height:20px;height:20px;letter-spacing:0.638px;">Charset:</div>
<div class="a" style="left:1134px;top:590.3px;width:92px;height:29.700000000000045px;background:#45494a;border:1px solid #646464;"></div>
<div class="t" style="left:1040.40px;top:640.10px;font-size:16.7px;line-height:20px;height:20px;letter-spacing:0.486px;">JMX Port:</div>
<div class="a" style="left:1134px;top:634.2px;width:92px;height:29.699999999999932px;background:#45494a;border:1px solid #646464;"></div>
<div class="t" style="left:1141.80px;top:640.10px;font-size:16.7px;line-height:20px;height:20px;letter-spacing:2.086px;">9999</div>
<div class="a" style="left:1246px;top:634.2px;width:90.29999999999995px;height:30.0px;background:#4c5052;border:1px solid #5e6060;border-radius:4.5px;box-shadow:0 1px 1.5px rgba(0,0,0,.22);"></div>
<div class="t" style="left:1274.50px;top:640.10px;font-size:16.7px;line-height:20px;height:20px;letter-spacing:0.194px;">Ping</div>
<div class="t" style="left:1039.40px;top:683.90px;font-size:16.7px;line-height:20px;height:20px;letter-spacing:0.624px;">Remote Staging</div>
<div class="a" style="left:1175px;top:693px;width:742px;height:1px;background:#585b5d"></div>
<div class="t" style="left:1065.90px;top:723.90px;font-size:16.7px;line-height:20px;height:20px;letter-spacing:0.581px;">Type:</div>
<div class="a" style="left:1125px;top:717.4px;width:792px;height:30.5px;background:#3c3f41;border:1.4px solid #646668;border-radius:4.5px;"></div>
<svg style="left:1896.9px;top:729.9499999999999px" width="11.4" height="6.5" viewBox="0 0 11.4 6.5" ><path d="M0 0 H11.4 L5.7 6.5 Z" fill="#9a9da0"/></svg>
<div class="t" style="left:1064.30px;top:767.50px;font-size:16.7px;line-height:20px;height:20px;letter-spacing:1.172px;">Host:</div>
<div class="a" style="left:1125px;top:761px;width:754.4000000000001px;height:30.299999999999955px;background:#3c3f41;border:1.4px solid #646668;border-radius:4.5px;"></div>
<svg style="left:1859.4px;top:773.4499999999999px" width="11.4" height="6.5" viewBox="0 0 11.4 6.5" ><path d="M0 0 H11.4 L5.7 6.5 Z" fill="#9a9da0"/></svg>
<div class="a" style="left:1887px;top:761.4px;width:30px;height:29.800000000000068px;background:#4c5052;border:1px solid #5e6060;border-radius:4.5px;box-shadow:0 1px 1.5px rgba(0,0,0,.22);"></div>
<div class="t" style="left:1894.70px;top:767.50px;font-size:16.7px;line-height:20px;height:20px;letter-spacing:0.364px;">...</div>
<div class="t" style="left:1064.30px;top:811.10px;font-size:16.7px;line-height:20px;height:20px;letter-spacing:0.843px;">Deployment target</div>
<div class="a" style="left:1222.7px;top:820px;width:694.3px;height:1px;background:#585b5d"></div>
<div class="t" style="left:1039.40px;top:875.90px;font-size:16.7px;line-height:20px;height:20px;letter-spacing:0.773px;">Remote Connection Settings</div>
<div class="a" style="left:1279px;top:885.4px;width:638px;height:1px;background:#585b5d"></div>
<div class="t" style="left:1064.40px;top:915.70px;font-size:16.7px;line-height:20px;height:20px;letter-spacing:1.197px;">Host:</div>
<div class="a" style="left:1123.8px;top:910px;width:793.0px;height:29.600000000000023px;background:#45494a;border:1px solid #646464;"></div>
<div class="t" style="left:1130.70px;top:915.70px;font-size:16.7px;line-height:20px;height:20px;letter-spacing:0.909px;">localhost</div>
<div class="t" style="left:1064.40px;top:959.50px;font-size:16.7px;line-height:20px;height:20px;letter-spacing:0.749px;">Port:</div>
<div class="a" style="left:1123.8px;top:953.8px;width:72.5px;height:29.40000000000009px;background:#45494a;border:1px solid #646464;"></div>
<div class="t" style="left:1131.70px;top:959.50px;font-size:16.7px;line-height:20px;height:20px;letter-spacing:1.053px;">9081</div>
<svg style="left:1033.6px;top:1048.6px" width="10.8" height="6.4" viewBox="0 0 10.8 6.4" ><path d="M0 0 H10.8 L5.4 6.4 Z" fill="#9a9da0"/></svg>
<div class="t" style="left:1054.90px;top:1041.90px;font-size:16.7px;line-height:20px;height:20px;letter-spacing:0.672px;">Before launch: Build, Activate tool window</div>
<div class="a" style="left:1400px;top:1051.4px;width:528px;height:1px;background:#585b5d"></div>
<div class="a" style="left:1029px;top:1067.4px;width:902.6px;height:60px;border:1px solid #323537;"></div>
<div class="a" style="left:1030px;top:1068.4px;width:900.6px;height:27.6px;background:#414547"></div>
<div class="a" style="left:1030px;top:1096px;width:900.6px;height:1px;background:#323537"></div>
<svg style="left:1032px;top:1073.4px" width="18.24" height="16.8" viewBox="0 0 19 17.5" ><path d="M0.3 6.2 L6.6 0.6 Q9.2 -0.5 11 1 L8.4 3.3 L18.8 13.6 L15.6 17 L5.6 6.3 L2.9 8.8 Z" fill="#499c54"/></svg>
<div class="t" style="left:1055.90px;top:1072.90px;font-size:16.7px;line-height:20px;height:20px;letter-spacing:0.793px;">Build</div>
<svg style="left:1039.9px;top:1105.9px" width="12.6" height="12.6" viewBox="0 0 12.6 12.6" ><path d="M0 6.3 H12.6 M6.3 0 V12.6" stroke="#afb1b3" stroke-width="2.2" fill="none"/></svg>
<svg style="left:1072.2px;top:1111.1000000000001px" width="13" height="2.2" viewBox="0 0 13 2.2" ><rect width="13" height="2.2" fill="#5e6162"/></svg>
<svg style="left:1103.4px;top:1103.6px" width="17" height="17" viewBox="0 0 17 17" ><path d="M0 17 L0.8 12.4 L10.6 2.6 L14.4 6.4 L4.6 16.2 Z M11.8 1.4 L13 0.2 C13.4 -0.1 13.9 -0.1 14.3 0.2 L16.8 2.7 C17.1 3.1 17.1 3.6 16.8 4 L15.6 5.2 Z" fill="#5e6162"/></svg>
<svg style="left:1136.2px;top:1108.5px" width="15" height="7.4" viewBox="0 0 15 7.4" ><path d="M0 7.4 L7.5 0 L15 7.4 Z" fill="#5e6162"/></svg>
<svg style="left:1168.7px;top:1108.5px" width="15" height="7.4" viewBox="0 0 15 7.4" ><path d="M0 0 H15 L7.5 7.4 Z" fill="#5e6162"/></svg>
<div class="a" style="left:1039px;top:1137.4px;width:17.4px;height:17.4px;border:1.3px solid #6e7173;background:#43494a;border-radius:3.5px;"></div>
<div class="t" style="left:1064.30px;top:1136.90px;font-size:16.7px;line-height:20px;height:20px;letter-spacing:0.459px;">Show this page</div>
<div class="a" style="left:1195.2px;top:1137.4px;width:17.4px;height:17.4px;border:1.3px solid #6e7173;background:#43494a;border-radius:3.5px;"><svg style="left:2px;top:2.5px" width="12" height="11" viewBox="0 0 12 11"><path d="M1 5.6 L4.4 9.4 L11 1" fill="none" stroke="#bbbbbb" stroke-width="2"/></svg></div>
<div class="t" style="left:1220.60px;top:1136.90px;font-size:16.7px;line-height:20px;height:20px;letter-spacing:0.677px;">Activate tool window</div>
<div class="a" style="left:1627.4px;top:1183.3px;width:90.59999999999991px;height:29.700000000000045px;background:#4c5052;border:1px solid #5e6060;border-radius:4.5px;box-shadow:0 1px 1.5px rgba(0,0,0,.22);"></div>
<div class="t" style="left:1645.00px;top:1189.10px;font-size:16.7px;line-height:20px;height:20px;letter-spacing:0.713px;">Cancel</div>
<div class="a" style="left:1733.3px;top:1183.3px;width:89.70000000000005px;height:29.700000000000045px;background:#4c5052;border:1px solid #5e6060;border-radius:4.5px;box-shadow:0 1px 1.5px rgba(0,0,0,.22);"></div>
<div class="t" style="left:1756.20px;top:1189.10px;font-size:16.7px;line-height:20px;height:20px;letter-spacing:0.475px;">Apply</div>
<div class="a" style="left:1838.3px;top:1183.3px;width:89.70000000000005px;height:29.700000000000045px;background:#365880;border:1px solid #4c708c;border-radius:4px;"></div>
<div class="t" style="left:1871.40px;top:1189.10px;font-size:16.4px;line-height:20px;height:20px;letter-spacing:-0.149px;">OK</div>
<!-- arrows -->
<svg style="left:0;top:0" width="2304" height="1323" viewBox="0 0 2304 1323"><g fill="#ea3323"><path d="M670.8 285.7 L661.6 384.6 L673.0 382.7 L649.0 411.0 L634.2 377.0 L644.6 382.0 L664.3 284.8 A3.3 3.3 0 0 1 670.8 285.7 Z"/><path d="M971.4 333.3 L837.8 475.7 L848.1 480.9 L812.0 489.5 L820.2 453.3 L825.6 463.6 L966.7 328.6 A3.3 3.3 0 0 1 971.4 333.3 Z"/><path d="M1495.9 386.2 L1346.7 535.9 L1356.8 541.4 L1320.5 549.0 L1329.8 513.1 L1334.8 523.4 L1491.3 381.4 A3.3 3.3 0 0 1 1495.9 386.2 Z"/><path d="M1369.9 912.3 L1245.2 969.3 L1252.6 978.2 L1216.0 972.0 L1237.7 941.9 L1238.6 953.4 L1367.4 906.2 A3.3 3.3 0 0 1 1369.9 912.3 Z"/></g></svg>
</body></html>
